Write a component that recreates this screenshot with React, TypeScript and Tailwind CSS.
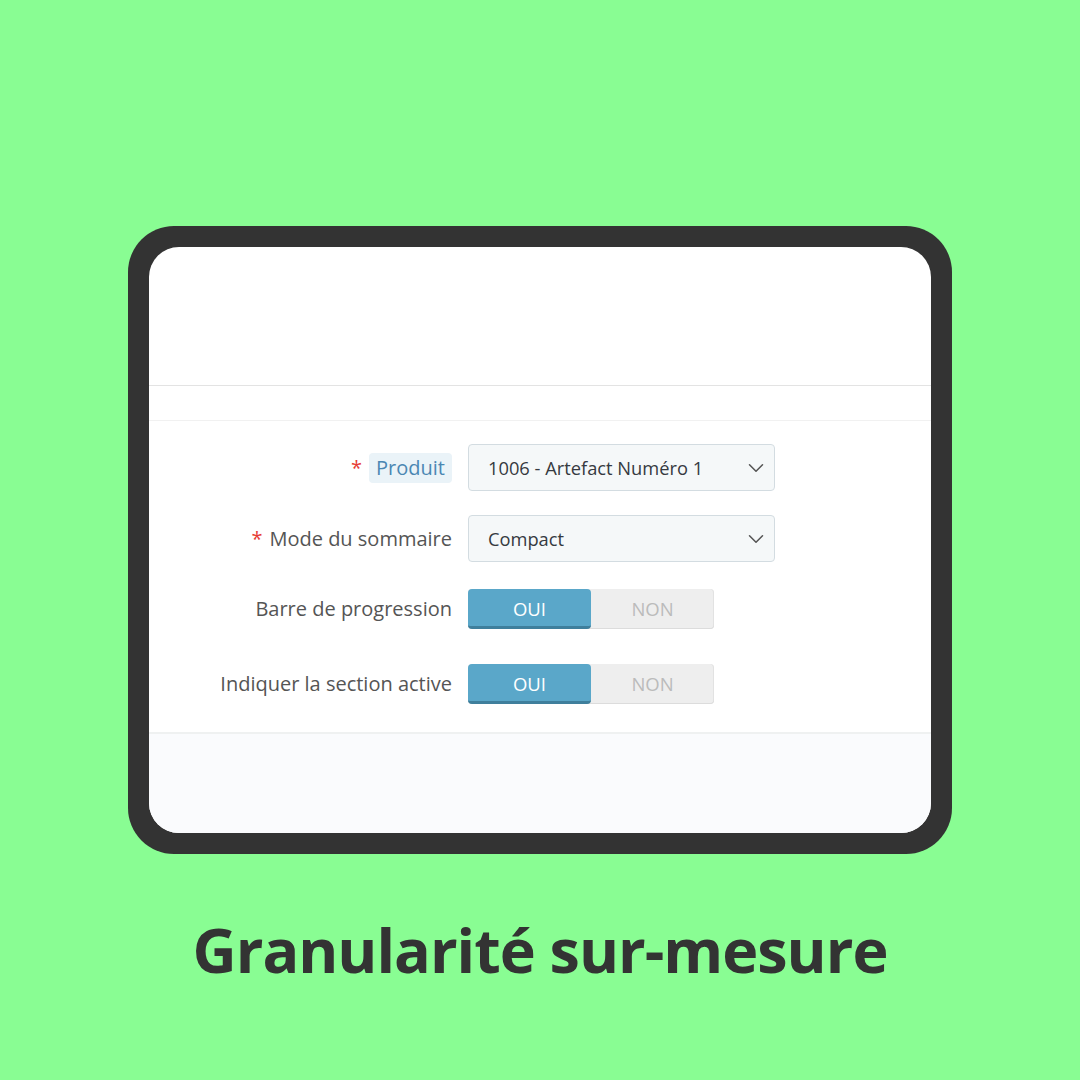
import { ChevronDown } from "lucide-react";

const font = { fontFamily: '"Open Sans", "Noto Sans", sans-serif' };

function Select({ value }: { value: string }) {
  return (
    <div className="flex h-[47px] w-[307px] items-center justify-between rounded-[4px] border border-[#d3dce1] bg-[#f5f8f9] pl-[19px] pr-[5px] text-[18.3px] text-[#363a41]">
      <span>{value}</span>
      <ChevronDown className="h-[26px] w-[26px] text-[#555]" strokeWidth={1.4} />
    </div>
  );
}

function Toggle() {
  return (
    <div className="flex h-[40px] w-[246px] rounded-[4px] bg-[#eeeeee] text-[18.5px] shadow-[inset_0_-1px_0_#dcdcdc,inset_-1px_0_0_#e2e2e2]">
      <div className="flex w-[123px] items-center justify-center rounded-[4px] border-b-[3px] border-[#3f7f9c] bg-[#5aa7c9] pt-[2px] text-white">
        OUI
      </div>
      <div className="flex flex-1 items-center justify-center text-[#bbbbbb]">NON</div>
    </div>
  );
}

function Row({ label, children, required, highlight }: { label: string; children: React.ReactNode; required?: boolean; highlight?: boolean }) {
  return (
    <div className="flex items-center">
      <div className="flex w-[303px] items-center justify-end text-[20px] text-[#555]">
        {required && <span className="mr-[7px] text-[#e63c35]">*</span>}
        {highlight ? (
          <span className="rounded-[4px] bg-[#eaf3f8] px-[7px] py-[0px] text-[#4b87b3]">{label}</span>
        ) : (
          <span>{label}</span>
        )}
      </div>
      <div className="ml-[16px]">{children}</div>
    </div>
  );
}

export default function App() {
  return (
    <div className="flex h-[1080px] w-[1080px] flex-col items-center bg-[#89fd93] pt-[226px]" style={font}>
      <div className="h-[628px] w-[824px] rounded-[46px] bg-[#333333] p-[21px]">
        <div className="flex h-full flex-col overflow-hidden rounded-[30px] bg-white">
          <div className="h-[139px] shrink-0 border-b border-[#e3e3e3]" />
          <div className="h-[35px] shrink-0 border-b border-[#f1f1f1]" />
          <div className="flex shrink-0 flex-col border-b-2 border-[#eff1f1] pb-[28px] pt-[23px]">
            <Row label="Produit" required highlight>
              <Select value="1006 - Artefact Numéro 1" />
            </Row>
            <div className="mt-[24px]">
              <Row label="Mode du sommaire" required>
                <Select value="Compact" />
              </Row>
            </div>
            <div className="mt-[27px]">
              <Row label="Barre de progression">
                <Toggle />
              </Row>
            </div>
            <div className="mt-[35px]">
              <Row label="Indiquer la section active">
                <Toggle />
              </Row>
            </div>
          </div>
          <div className="flex-1 bg-[#fafbfd]" />
        </div>
      </div>
      <h1 className="mt-[65px] text-[61px] font-bold leading-none tracking-[-1px] text-[#333333]">
        Granularité sur-mesure
      </h1>
    </div>
  );
}
